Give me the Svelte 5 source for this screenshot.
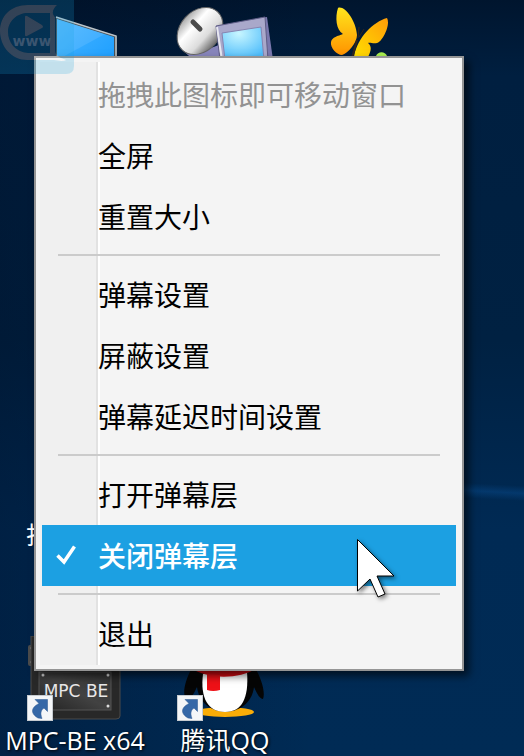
<script lang="ts">
  type Entry = { label: string; disabled?: boolean; checked?: boolean };

  const groups: Entry[][] = [
    [{ label: '拖拽此图标即可移动窗口', disabled: true }, { label: '全屏' }, { label: '重置大小' }],
    [{ label: '弹幕设置' }, { label: '屏蔽设置' }, { label: '弹幕延迟时间设置' }],
    [{ label: '打开弹幕层' }, { label: '关闭弹幕层', checked: true }],
    [{ label: '退出' }],
  ];
</script>

{#snippet shortcut()}
  <svg class="shortcut" viewBox="0 0 26 26" aria-hidden="true">
    <rect x="0.5" y="0.5" width="25" height="25" fill="#f4f6f8" stroke="#c6cbd0" />
    <path
      d="M8 4.500 H20.500 V16.500 L17 13 C14 15 13 18 15 23.500 L11 23 C4 19 3 13 12 8.500 Z"
      fill="#3568a8"
      stroke="#24528e"
      stroke-width="0.5"
    />
  </svg>
{/snippet}

<main class="desktop">
  <svg class="icon computer" viewBox="0 0 64 60" aria-hidden="true">
    <defs>
      <linearGradient id="screen" x1="0" y1="0" x2="1" y2="1">
        <stop offset="0" stop-color="#4ab5ff" />
        <stop offset="1" stop-color="#179cff" />
      </linearGradient>
    </defs>
    <path d="M1 1 L62 20 V60 H1 Z" fill="#4a5054" />
    <path d="M2 3 L59 21 V60 H2 Z" fill="url(#screen)" />
    <path d="M2 3 L50 18 L2 44 Z" fill="#fff" opacity="0.1" />
    <path d="M1 1 L61 20 V60" fill="none" stroke="#bcc5ca" stroke-width="1.500" />
  </svg>

  <svg class="icon network" viewBox="0 0 100 60" aria-hidden="true">
    <defs>
      <linearGradient id="dish" x1="0" y1="0" x2="1" y2="0">
        <stop offset="0" stop-color="#aaa" />
        <stop offset="0.300" stop-color="#fff" />
        <stop offset="0.700" stop-color="#dcdcdc" />
        <stop offset="1" stop-color="#6c6c6c" />
      </linearGradient>
      <radialGradient id="monitor" cx="0.400" cy="0.200" r="0.800">
        <stop offset="0" stop-color="#c8f6ff" />
        <stop offset="1" stop-color="#4fbdfb" />
      </radialGradient>
    </defs>
    <path d="M6 38 C14 50 28 55 50 42 V60 H22 C12 56 7 48 6 38 Z" fill="#8785bb" />
    <ellipse cx="26" cy="31" rx="20" ry="26" transform="rotate(42 26 31)" fill="url(#dish)" stroke="#666" />
    <path d="M19 22 L26 29" stroke="#4b4b4b" stroke-width="5" stroke-linecap="round" />
    <path d="M42 26 L93 17 L99 60 H46 Z" fill="#7a78ae" />
    <path d="M42 26 L91 17 L94 60 H46 Z" fill="#a9a8ca" stroke="#5e5c85" />
    <path d="M43 27 L48 60" stroke="#e8e8f0" stroke-width="2" />
    <path d="M48 33 L87 27 L90 60 H51 Z" fill="url(#monitor)" stroke="#8784b0" />
  </svg>

  <svg class="icon butterfly" viewBox="0 0 64 56" aria-hidden="true">
    <defs>
      <linearGradient id="wing" x1="0" y1="0" x2="0" y2="1">
        <stop offset="0" stop-color="#ffe51c" />
        <stop offset="1" stop-color="#ff9300" />
      </linearGradient>
      <linearGradient id="wing-right" x1="1" y1="0" x2="0" y2="1">
        <stop offset="0" stop-color="#ff9c08" />
        <stop offset="1" stop-color="#ffe000" />
      </linearGradient>
    </defs>
    <path
      d="M8 8 C14 5 26 20 27 35 C27 43 18 53 12 55 C7 55 0 48 1 42 C2 37 8 36 13 34 C6 30 5 17 8 8 Z"
      fill="url(#wing)"
    />
    <path
      d="M57 18 C61 25 52 42 47 43 C43 44 40 42 38 43 C43 47 40 53 38 57 H24 C27 38 43 22 57 18 Z"
      fill="url(#wing-right)"
    />
    <path d="M22 58 L27 40" fill="none" stroke="#33251b" stroke-width="2" />
    <path d="M28 38 L29 27 M29 37 L34 29" fill="none" stroke="#33251b" />
    <path d="M46 56 C48 51 55 51 57 56 Z" fill="#a9ef50" />
  </svg>

  <div class="folder">打</div>

  <div class="app mpc">
    <svg class="tile" viewBox="0 0 94 84" aria-hidden="true">
      <defs>
        <linearGradient id="steel" x1="0" y1="1" x2="1" y2="0">
          <stop offset="0" stop-color="#222" />
          <stop offset="0.500" stop-color="#424242" />
          <stop offset="1" stop-color="#333" />
        </linearGradient>
      </defs>
      <rect x="0" y="9" width="10" height="21" rx="2" fill="#4b4b4b" />
      <circle cx="4" cy="12" r="1.500" fill="#ddd" />
      <circle cx="4" cy="26" r="1.500" fill="#ddd" />
      <path d="M3 0 H92 V80 Q92 83 88 83 H3 Z" fill="#282828" stroke="#4b4b4b" />
      <rect x="11" y="36" width="72" height="38" fill="url(#steel)" stroke="#555" />
      <g fill="#ddd">
        <circle cx="15" cy="39" r="1.500" />
        <circle cx="80" cy="39" r="1.500" />
        <circle cx="80" cy="70" r="1.500" />
      </g>
      <text x="48" y="61" text-anchor="middle">MPC BE</text>
    </svg>
    {@render shortcut()}
    <span class="name">MPC-BE x64</span>
  </div>

  <div class="app qq">
    <svg class="tile" viewBox="0 0 94 84" aria-hidden="true">
      <ellipse cx="47" cy="76" rx="29" ry="5" fill="#faad08" />
      <path d="M16 28 C6 45 3 62 10 63 C14 62 17 55 19 51 C23 84 72 84 76 51 C79 58 82 63 85 63 C88 55 82 38 73 26 Z" fill="#050505" />
      <path d="M25 38 C22 62 30 76 47 76 C64 76 71 62 69 36 Z" fill="#fff" />
      <path d="M12 32 C32 44 62 43 79 32 L72 22 H18 Z" fill="#e00b12" />
      <path d="M29 38 L42 39 V54 Q35 56 29 54 Z" fill="#ee1117" />
    </svg>
    {@render shortcut()}
    <span class="name">腾讯QQ</span>
  </div>

  <div class="menu" role="menu">
    {#each groups as group, i}
      {#if i > 0}
        <hr />
      {/if}
      {#each group as entry}
        <button
          type="button"
          role={entry.checked ? 'menuitemcheckbox' : 'menuitem'}
          aria-checked={entry.checked}
          class:active={entry.checked}
          disabled={entry.disabled}
        >
          <span class="mark">
            {#if entry.checked}
              <svg viewBox="0 0 20 20" aria-hidden="true">
                <path d="M1.500 10.500 L8 17 L18.500 1.500" fill="none" stroke="#fff" stroke-width="3.500" />
              </svg>
            {/if}
          </span>
          {entry.label}
        </button>
      {/each}
    {/each}
  </div>

  <div class="floating">
    <svg viewBox="0 0 74 74" role="img" aria-label="www">
      <defs>
        <g id="logo">
          <path
            fill-rule="evenodd"
            d="M57 5 H28 C10 5 0 17 0 31 C0 47 12 60 27 60 H54 C59 60 61 62 66 60 C57 57 55 54 55 49 V17 C51 13 53 9 57 5 Z M50 13 V53 H28 C15 52 8 42 8 32 C8 21 17 13 28 13 Z"
          />
          <path d="M25 17 Q25 15 27 16 L42 25 Q44 27 42 28 L27 36 Q25 37 25 35 Z" />
        </g>
        <mask id="cutout">
          <rect width="74" height="74" fill="#fff" />
          <use href="#logo" fill="#000" />
        </mask>
      </defs>
      <path d="M0 0 H74 V66 Q74 74 66 74 H0 Z" fill="#14a3df" opacity="0.2" mask="url(#cutout)" />
      <use href="#logo" fill="#fff" opacity="0.2" />
      <text x="32" y="46" text-anchor="middle">www</text>
    </svg>
  </div>

  <svg class="cursor" viewBox="0 0 44 64" aria-hidden="true">
    <path
      d="M1.500 1.500 V53 L14 41 L22 59 L29 56 L21 38 H38 Z"
      fill="#fff"
      stroke="#000"
      stroke-width="1"
    />
  </svg>
</main>

<style>
  :global(body) {
    margin: 0;
  }

  .desktop {
    position: relative;
    box-sizing: border-box;
    min-height: 100vh;
    overflow: hidden;
    padding: 56px 60px 85px 34px;
    font-family: 'Noto Sans CJK SC', sans-serif;
    background:
      linear-gradient(3deg, transparent 34%, rgba(10, 80, 150, 0.4) 35%, transparent 36%) right / 60px 100% no-repeat,
      linear-gradient(90deg, rgba(0, 10, 30, 0.3), transparent 60%),
      linear-gradient(#00152e, #001f40 10%, #002142 45%, #002a54 70%, #002b55);
  }

  .icon {
    position: absolute;
    top: 0;
  }

  .computer {
    left: 55px;
    top: 16px;
    width: 64px;
  }

  .network {
    left: 174px;
    width: 100px;
  }

  .butterfly {
    left: 330px;
    width: 64px;
  }

  .folder {
    position: absolute;
    left: 26px;
    top: 516px;
    color: #fff;
    font-size: 24px;
    line-height: 36px;
  }

  .app {
    position: absolute;
    top: 636px;
    display: flex;
    flex-direction: column;
    align-items: center;
    width: 150px;
  }

  .mpc {
    left: 0;
  }

  .qq {
    left: 150px;
  }

  .tile {
    width: 94px;
    height: 84px;
  }

  .tile text {
    font: 17px 'DejaVu Sans', sans-serif;
    fill: #e8e8e8;
  }

  .shortcut {
    position: absolute;
    left: 27px;
    top: 59px;
    width: 26px;
    height: 26px;
  }

  .name {
    margin-top: 2px;
    color: #fff;
    font-family: 'Open Sans', 'Noto Sans CJK SC', sans-serif;
    font-size: 25px;
    line-height: 36px;
    white-space: nowrap;
    text-shadow: 1px 1px 3px #000;
  }

  .menu {
    position: relative;
    padding: 6px 6px 5px;
    border: 2px solid #959595;
    background:
      linear-gradient(90deg, #f0f0f0 56px, #e2e2e2 56px 58px, #fff 58px 60px, transparent 60px) 4px 4px / 100%
        calc(100% - 8px) no-repeat,
      #f4f4f4;
    box-shadow: 5px 5px 8px rgba(0, 0, 0, 0.6);
  }

  .menu button {
    display: flex;
    align-items: center;
    width: 100%;
    height: 61px;
    padding: 0 0 2px;
    border: 0;
    background: none;
    color: #000;
    font: inherit;
    font-size: 28px;
    text-align: left;
    white-space: nowrap;
  }

  .menu button:disabled {
    color: #929292;
  }

  .menu button.active {
    background: #1ca0e2;
    color: #fff;
    font-weight: 500;
  }

  .mark {
    display: flex;
    flex: none;
    box-sizing: border-box;
    width: 56px;
    padding-left: 14px;
  }

  .mark svg {
    width: 20px;
    height: 20px;
  }

  hr {
    height: 2px;
    margin: 7px 16px 8px;
    border: 0;
    background: #cbcbcb;
  }

  .floating {
    position: absolute;
    left: 0;
    top: 0;
    width: 74px;
    height: 74px;
  }

  .floating svg {
    display: block;
  }

  .floating text {
    font: bold 14px 'DejaVu Sans', sans-serif;
    fill: #3b5570;
  }

  .cursor {
    position: absolute;
    left: 356px;
    top: 538px;
    width: 44px;
    height: 64px;
    filter: drop-shadow(2px 2px 2px rgba(0, 0, 0, 0.5));
  }
</style>
